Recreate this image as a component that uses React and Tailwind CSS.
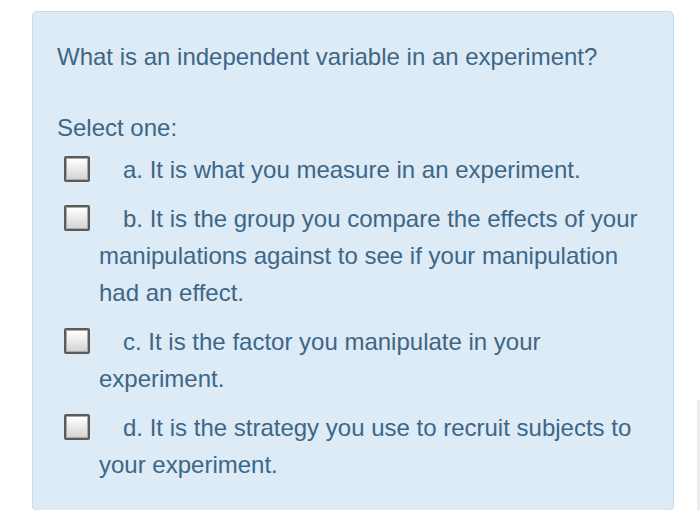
import React from 'react';

const options = [
    { key: 'a', text: 'It is what you measure in an experiment.' },
    { key: 'b', text: 'It is the group you compare the effects of your manipulations against to see if your manipulation had an effect.' },
    { key: 'c', text: 'It is the factor you manipulate in your experiment.' },
    { key: 'd', text: 'It is the strategy you use to recruit subjects to your experiment.' },
];

function Checkbox() {
    return (
        <span className="inline-block align-middle -ml-[35px] mr-[33px] -mt-[6px] w-[26px] h-[26px] border-2 border-[#5b5b5b] rounded-[2px]">
            <span className="block w-full h-full border border-[#a9a9a9] bg-gradient-to-b from-white to-[#d4d4d4]"></span>
        </span>
    );
}

export default function App() {
    return (
        <div className="relative w-[700px] h-[510px] bg-white overflow-hidden font-['Liberation_Sans',Arial,sans-serif]">
            <div className="ml-[32px] mt-[11px] w-[642px] bg-[#dcebf6] border border-[#c3dbec] rounded-[5px] pt-[26px] pl-[24px] pr-[20px] pb-[27px] text-[#3d6687] text-[24px] leading-[37px]">
                <p>What is an independent variable in an experiment?</p>

                <p className="mt-[34px]">Select one:</p>

                <div className="mt-[5px] flex flex-col gap-[12px]">
                    {options.map((o) => (
                        <div key={o.key} className="pl-[42px]">
                            <Checkbox />
                            {o.key}. {o.text}
                        </div>
                    ))}
                </div>
            </div>

            {/* faint scroll strip on the right edge */}
            <div className="absolute right-0 top-[400px] w-[3px] h-[110px] bg-[#ebebeb]"></div>
        </div>
    );
}
